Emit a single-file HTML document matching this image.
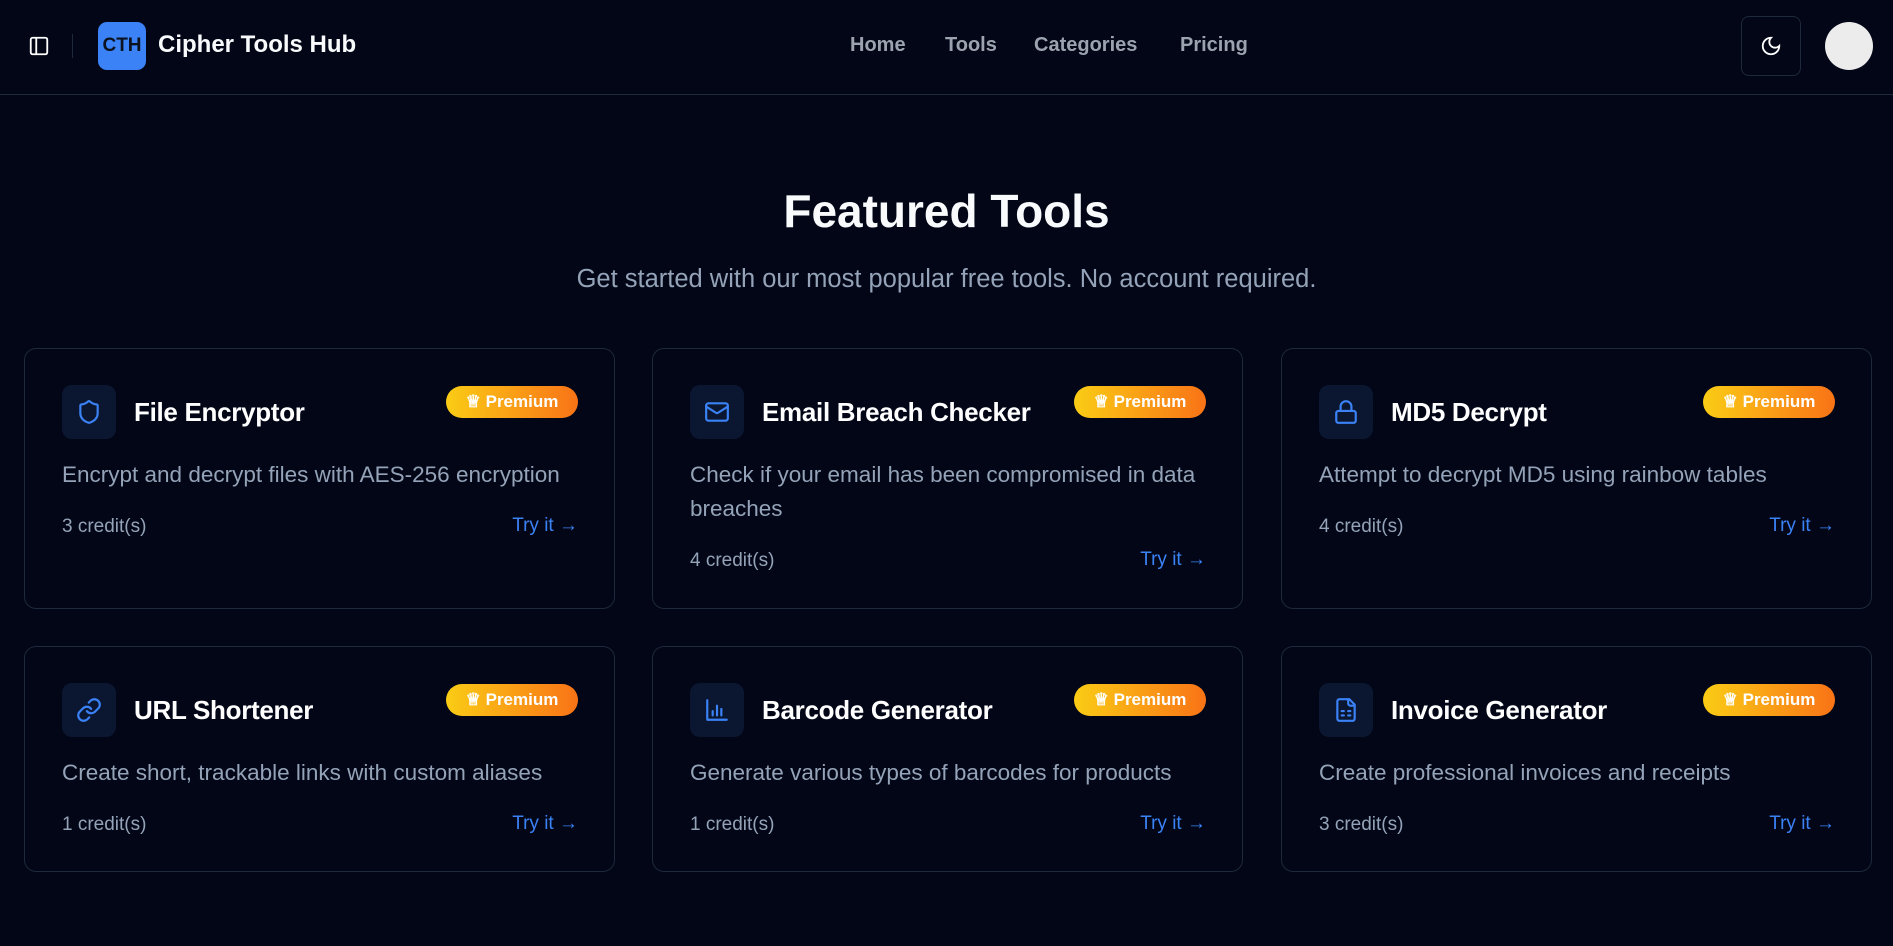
<!DOCTYPE html>
<html><head><meta charset="utf-8"><style>
*{box-sizing:border-box;margin:0;padding:0}
body{width:1893px;height:946px;background:#020617;font-family:"Liberation Sans",Arial,sans-serif;color:#f8fafc;overflow:hidden;position:relative}
.hdr{position:absolute;left:0;top:0;width:1893px;height:95px;border-bottom:1px solid #1e293b}
.nav a{position:absolute;top:34px;font-size:20px;color:#9ca3af;font-weight:bold;text-decoration:none}
h1{position:absolute;top:184px;width:100%;text-align:center;font-size:46px;font-weight:bold}
.sub{position:absolute;top:265px;width:100%;text-align:center;font-size:25.5px;color:#94a3b8}
.card{position:absolute;width:591px;border:1px solid #1e293b;border-radius:12px}
.ib{position:absolute;left:37px;top:36px;width:54px;height:54px;border-radius:10px;background:#0b1731;display:flex;align-items:center;justify-content:center}
.t{position:absolute;left:109px;top:48px;font-size:26px;font-weight:bold;color:#fff;letter-spacing:-0.3px}
.b{position:absolute;right:36px;top:37px;height:32px;width:132px;border-radius:16px;background:linear-gradient(90deg,#facc15,#f97316);color:#fff;font-weight:bold;font-size:17px;display:flex;align-items:center;justify-content:center;gap:5px}
.d{position:absolute;left:37px;top:109px;width:530px;font-size:22.5px;line-height:34px;color:#94a3b8}
.c{position:absolute;left:37px;font-size:19px;color:#94a3b8}
.tr{position:absolute;right:36px;font-size:19px;color:#3b82f6}
</style></head><body>
<div class="hdr">
<svg style="position:absolute;left:28px;top:35px" width="22" height="22" viewBox="0 0 24 24" fill="none" stroke="#fff" stroke-width="2"><rect x="3" y="3" width="18" height="18" rx="2"/><path d="M9 3v18"/></svg>
<div style="position:absolute;left:72px;top:34px;width:1px;height:24px;background:#1e293b"></div>
<div style="position:absolute;left:98px;top:22px;width:48px;height:48px;border-radius:9px;background:#3b82f6;color:#0b1220;font-weight:bold;font-size:19px;display:flex;align-items:center;justify-content:center">CTH</div>
<div style="position:absolute;left:158px;top:31px;font-size:24px;font-weight:bold">Cipher Tools Hub</div>
<div class="nav"><a style="left:850px">Home</a><a style="left:945px">Tools</a><a style="left:1034px">Categories</a><a style="left:1180px">Pricing</a></div>
<div style="position:absolute;left:1741px;top:16px;width:60px;height:60px;border:1px solid #1e293b;border-radius:8px;display:flex;align-items:center;justify-content:center"><svg width="22" height="22" viewBox="0 0 24 24" fill="none" stroke="#fff" stroke-width="2"><path d="M12 3a6 6 0 0 0 9 9 9 9 0 1 1-9-9Z"/></svg></div>
<div style="position:absolute;left:1825px;top:22px;width:48px;height:48px;border-radius:50%;background:#ececec"></div>
</div>
<h1>Featured Tools</h1>
<div class="sub">Get started with our most popular free tools. No account required.</div>

<div class="card" style="left:24px;top:348px;height:261px">
<div class="ib"><svg width="26" height="26" viewBox="0 0 24 24" fill="none" stroke="#3b82f6" stroke-width="2" stroke-linecap="round" stroke-linejoin="round"><path d="M20 13c0 5-3.5 7.5-7.66 8.950a1 1 0 0 1-.67-.01C7.5 20.5 4 18 4 13V6a1 1 0 0 1 1-1c2 0 4.5-1.2 6.24-2.72a1.17 1.170 0 0 1 1.52 0C14.51 3.81 17 5 19 5a1 1 0 0 1 1 1z"/></svg></div>
<div class="t">File Encryptor</div><div class="b">♕ Premium</div>
<div class="d">Encrypt and decrypt files with AES-256 encryption</div>
<div class="c" style="top:167px">3 credit(s)</div><div class="tr" style="top:166px">Try it →</div></div>

<div class="card" style="left:652px;top:348px;height:261px">
<div class="ib"><svg width="26" height="26" viewBox="0 0 24 24" fill="none" stroke="#3b82f6" stroke-width="2" stroke-linecap="round" stroke-linejoin="round"><rect x="2" y="4" width="20" height="16" rx="2"/><path d="m22 7-8.97 5.7a1.94 1.94 0 0 1-2.06 0L2 7"/></svg></div>
<div class="t">Email Breach Checker</div><div class="b">♕ Premium</div>
<div class="d">Check if your email has been compromised in data breaches</div>
<div class="c" style="top:201px">4 credit(s)</div><div class="tr" style="top:200px">Try it →</div></div>

<div class="card" style="left:1281px;top:348px;height:261px">
<div class="ib"><svg width="26" height="26" viewBox="0 0 24 24" fill="none" stroke="#3b82f6" stroke-width="2" stroke-linecap="round" stroke-linejoin="round"><rect x="3" y="11" width="18" height="11" rx="2"/><path d="M7 11V7a5 5 0 0 1 10 0v4"/></svg></div>
<div class="t">MD5 Decrypt</div><div class="b">♕ Premium</div>
<div class="d">Attempt to decrypt MD5 using rainbow tables</div>
<div class="c" style="top:167px">4 credit(s)</div><div class="tr" style="top:166px">Try it →</div></div>

<div class="card" style="left:24px;top:646px;height:226px">
<div class="ib"><svg width="26" height="26" viewBox="0 0 24 24" fill="none" stroke="#3b82f6" stroke-width="2" stroke-linecap="round" stroke-linejoin="round"><path d="M10 13a5 5 0 0 0 7.54.54l3-3a5 5 0 0 0-7.07-7.07l-1.72 1.71"/><path d="M14 11a5 5 0 0 0-7.54-.54l-3 3a5 5 0 0 0 7.07 7.07l1.71-1.71"/></svg></div>
<div class="t">URL Shortener</div><div class="b">♕ Premium</div>
<div class="d">Create short, trackable links with custom aliases</div>
<div class="c" style="top:167px">1 credit(s)</div><div class="tr" style="top:166px">Try it →</div></div>

<div class="card" style="left:652px;top:646px;height:226px">
<div class="ib"><svg width="26" height="26" viewBox="0 0 24 24" fill="none" stroke="#3b82f6" stroke-width="2" stroke-linecap="round" stroke-linejoin="round"><path d="M3 3v18h18"/><path d="M8 17v-4M12 17V8M16 17v-6"/></svg></div>
<div class="t">Barcode Generator</div><div class="b">♕ Premium</div>
<div class="d">Generate various types of barcodes for products</div>
<div class="c" style="top:167px">1 credit(s)</div><div class="tr" style="top:166px">Try it →</div></div>

<div class="card" style="left:1281px;top:646px;height:226px">
<div class="ib"><svg width="26" height="26" viewBox="0 0 24 24" fill="none" stroke="#3b82f6" stroke-width="2" stroke-linecap="round" stroke-linejoin="round"><path d="M15 2H6a2 2 0 0 0-2 2v16a2 2 0 0 0 2 2h12a2 2 0 0 0 2-2V7Z"/><path d="M14 2v4a2 2 0 0 0 2 2h4"/><path d="M8 13h2M14 13h2M8 17h2M14 17h2"/></svg></div>
<div class="t">Invoice Generator</div><div class="b">♕ Premium</div>
<div class="d">Create professional invoices and receipts</div>
<div class="c" style="top:167px">3 credit(s)</div><div class="tr" style="top:166px">Try it →</div></div>
</body></html>
